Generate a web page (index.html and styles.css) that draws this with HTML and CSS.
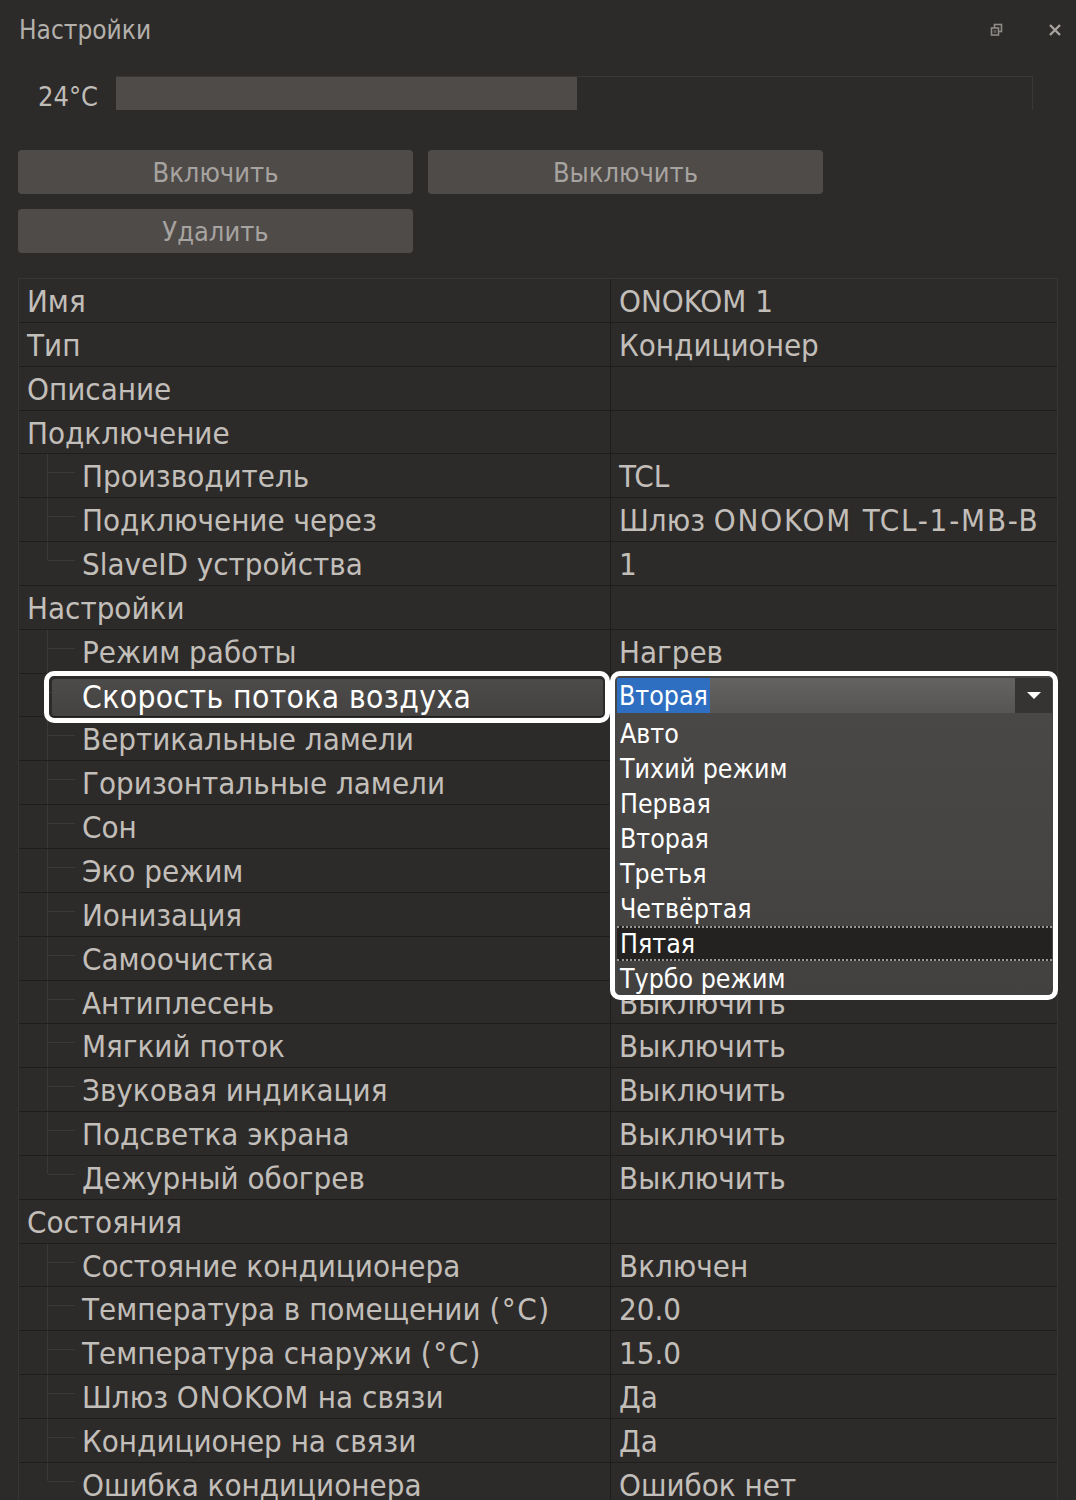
FILE: index.html
```html
<!DOCTYPE html>
<html lang="ru">
<head>
<meta charset="utf-8">
<title>Настройки</title>
<link rel="stylesheet" href="styles.css">
</head>
<body>
<div class="panel">
  <div class="header">
    <span class="title">Настройки</span>
    <span class="icons">
      <svg class="ico" width="14" height="14" viewBox="0 0 14 14"><rect x="4.5" y="1.5" width="7" height="7" fill="none" stroke="#8e8a86" stroke-width="1.6"/><rect x="1.5" y="5" width="7" height="7" fill="#2d2b29" stroke="#8e8a86" stroke-width="1.6"/><rect x="3.5" y="7" width="3" height="3" fill="#5a5754"/></svg>
      <svg class="ico close" width="14" height="14" viewBox="0 0 14 14"><path d="M2 2 L12 12 M12 2 L2 12" stroke="#a7a39f" stroke-width="2.4"/></svg>
    </span>
  </div>

  <div class="slider-row">
    <span class="temp">24°C</span>
    <div class="track"><div class="fill" style="width:461px"></div></div>
  </div>

  <div class="buttons">
    <div class="btn">Включить</div>
    <div class="btn">Выключить</div>
    <div class="btn">Удалить</div>
  </div>

  <div class="table">
    <div class="row"><div class="k">Имя</div><div class="v">ONOKOM 1</div></div>
    <div class="row"><div class="k">Тип</div><div class="v">Кондиционер</div></div>
    <div class="row"><div class="k">Описание</div><div class="v"></div></div>
    <div class="row"><div class="k">Подключение</div><div class="v"></div></div>
    <div class="row"><div class="k child">Производитель</div><div class="v">TCL</div></div>
    <div class="row"><div class="k child">Подключение через</div><div class="v">Шлюз <span class="caps">ONOKOM TCL-1-MB-B</span></div></div>
    <div class="row"><div class="k child last">SlaveID устройства</div><div class="v">1</div></div>
    <div class="row"><div class="k">Настройки</div><div class="v"></div></div>
    <div class="row"><div class="k child">Режим работы</div><div class="v">Нагрев</div></div>
    <div class="row sel-row">
      <div class="k child"><span class="hl">Скорость потока воздуха</span></div>
      <div class="v"></div>
      <div class="mark-left"></div>
      <div class="dropdown">
        <div class="combo"><span class="combo-sel">Вторая</span><span class="arrow"></span></div>
        <ul class="list">
          <li>Авто</li>
          <li>Тихий режим</li>
          <li>Первая</li>
          <li>Вторая</li>
          <li>Третья</li>
          <li>Четвёртая</li>
          <li class="focus">Пятая</li>
          <li>Турбо режим</li>
        </ul>
      </div>
    </div>
    <div class="row"><div class="k child">Вертикальные ламели</div><div class="v"></div></div>
    <div class="row"><div class="k child">Горизонтальные ламели</div><div class="v"></div></div>
    <div class="row"><div class="k child">Сон</div><div class="v"></div></div>
    <div class="row"><div class="k child">Эко режим</div><div class="v"></div></div>
    <div class="row"><div class="k child">Ионизация</div><div class="v"></div></div>
    <div class="row"><div class="k child">Самоочистка</div><div class="v"></div></div>
    <div class="row"><div class="k child">Антиплесень</div><div class="v">Выключить</div></div>
    <div class="row"><div class="k child">Мягкий поток</div><div class="v">Выключить</div></div>
    <div class="row"><div class="k child">Звуковая индикация</div><div class="v">Выключить</div></div>
    <div class="row"><div class="k child">Подсветка экрана</div><div class="v">Выключить</div></div>
    <div class="row"><div class="k child last">Дежурный обогрев</div><div class="v">Выключить</div></div>
    <div class="row"><div class="k">Состояния</div><div class="v"></div></div>
    <div class="row"><div class="k child">Состояние кондиционера</div><div class="v">Включен</div></div>
    <div class="row"><div class="k child">Температура в помещении <span class="unit">(°C)</span></div><div class="v">20.0</div></div>
    <div class="row"><div class="k child">Температура снаружи <span class="unit">(°C)</span></div><div class="v">15.0</div></div>
    <div class="row"><div class="k child">Шлюз <span class="caps">ONOKOM</span> на связи</div><div class="v">Да</div></div>
    <div class="row"><div class="k child">Кондиционер на связи</div><div class="v">Да</div></div>
    <div class="row"><div class="k child last">Ошибка кондиционера</div><div class="v">Ошибок нет</div></div>
  </div>
</div>
</body>
</html>
```
FILE: styles.css
```css
html, body {
  margin: 0;
  padding: 0;
  background: #2d2b29;
}
body {
  width: 1076px;
  height: 1500px;
  overflow: hidden;
  font-family: "DejaVu Sans Condensed", "DejaVu Sans", "Liberation Sans", sans-serif;
  color: #c2beba;
}
.panel {
  width: 1076px;
}
.header {
  height: 60px;
  display: flex;
  align-items: center;
  justify-content: space-between;
  padding: 0 14px 0 19px;
  box-sizing: border-box;
}
.title {
  font-size: 26px;
  color: #b4b0ac;
}
.icons {
  display: flex;
  align-items: center;
  gap: 44px;
}
.ico {
  display: block;
}
.slider-row {
  margin-top: 16px;
  height: 34px;
  display: flex;
  align-items: center;
  padding-left: 38px;
}
.temp {
  width: 78px;
  font-size: 27px;
  padding-top: 6px;
  color: #c0bcb8;
}
.track {
  width: 917px;
  height: 34px;
  box-sizing: border-box;
  border-top: 1px solid #3a3836;
  border-right: 1px solid #3a3836;
  display: flex;
}
.fill {
  height: 100%;
  background: #4f4b48;
}
.buttons {
  margin-top: 40px;
  padding-left: 18px;
  display: grid;
  grid-template-columns: 395px 395px;
  column-gap: 15px;
  row-gap: 15px;
}
.btn {
  height: 44px;
  background: #4f4b48;
  border-radius: 4px;
  display: flex;
  align-items: center;
  justify-content: center;
  font-size: 27px;
  color: #a7a3a0;
}
.table {
  margin: 25px 0 0 18px;
  width: 1040px;
  border-top: 1px solid #383634;
  border-left: 1px solid #383634;
  border-right: 1px solid #383634;
  box-sizing: border-box;
}
.row {
  position: relative;
  height: 43.85px;
  box-sizing: border-box;
  border-bottom: 1px solid #1f1e1d;
  display: grid;
  grid-template-columns: 592px 1fr;
  font-size: 31px;
  line-height: 42px;
}
.k, .v {
  white-space: nowrap;
  overflow: hidden;
  padding-top: 1px;
}
.k {
  position: relative;
  padding-left: 8px;
  border-right: 1px solid #1f1e1d;
}
.v {
  padding-left: 8px;
}
.caps {
  letter-spacing: 0.8px;
}
.v .caps {
  letter-spacing: 1.8px;
}
.unit {
  letter-spacing: 1.5px;
}
.k.child {
  padding-left: 63px;
}
.k.child::before {
  content: "";
  position: absolute;
  left: 28px;
  top: -1px;
  bottom: -1px;
  border-left: 1px solid #3b3937;
}
.k.child.last::before {
  bottom: auto;
  height: 19px;
}
.k.child::after {
  content: "";
  position: absolute;
  left: 29px;
  top: 18px;
  width: 27px;
  border-top: 1px solid #3b3937;
}
.sel-row .k.child {
  padding-left: 0;
}
.hl {
  display: block;
  margin: 4px 7px 0 33px;
  padding-left: 30px;
  height: 37px;
  line-height: 37px;
  background: linear-gradient(#4d4b49, #454341);
  border-radius: 3px;
  color: #ffffff;
  font-size: 31.5px;
  letter-spacing: 0.4px;
  position: relative;
  z-index: 1;
}
.mark-left {
  position: absolute;
  left: 25px;
  top: -3px;
  width: 556px;
  height: 42px;
  border: 5px solid #ffffff;
  border-radius: 10px;
  z-index: 2;
}
.dropdown {
  position: absolute;
  left: 591px;
  top: -3px;
  width: 438px;
  height: 319px;
  border: 5px solid #ffffff;
  border-radius: 10px;
  background: #484644;
  z-index: 3;
  overflow: hidden;
  font-size: 26.5px;
  line-height: 35px;
  color: #ffffff;
}
.combo {
  margin: 2px 1px 0 2px;
  height: 35px;
  background: linear-gradient(#656361, #575553);
  display: flex;
  justify-content: space-between;
}
.combo-sel {
  background: #2e6fc1;
  padding: 0 2px;
  height: 35px;
}
.arrow {
  width: 37px;
  height: 35px;
  background: #363432;
  position: relative;
}
.arrow::after {
  content: "";
  position: absolute;
  left: 12px;
  top: 14px;
  border-left: 7px solid transparent;
  border-right: 7px solid transparent;
  border-top: 7px solid #ffffff;
}
.list {
  list-style: none;
  margin: 0 1px 0 2px;
  padding: 3px 0 0;
  background: linear-gradient(#4a4846, #434140);
  height: 290px;
}
.list li {
  height: 35px;
  padding-left: 3px;
  box-sizing: border-box;
}
.list li.focus {
  background: #232221;
  border-top: 2px dotted #9a9794;
  border-bottom: 2px dotted #9a9794;
  line-height: 31px;
}
```
